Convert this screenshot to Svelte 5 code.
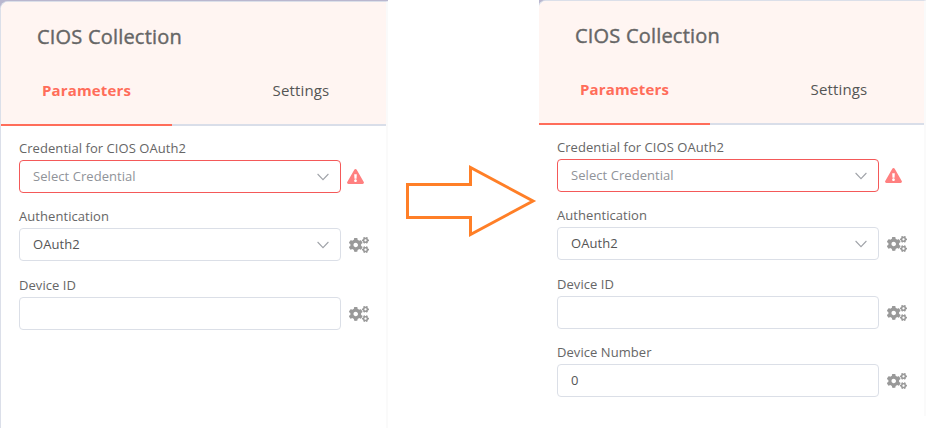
<script lang="ts">
  interface Field {
    label: string;
    value?: string;
    placeholder?: string;
    select?: boolean;
    invalid?: boolean;
    spaced?: boolean;
  }

  const baseFields: Field[] = [
    { label: 'Credential for CIOS OAuth2', placeholder: 'Select Credential', select: true, invalid: true },
    { label: 'Authentication', value: 'OAuth2', select: true },
    { label: 'Device ID', spaced: true },
  ];

  const panels = [
    { side: 'before', fields: baseFields },
    { side: 'after', fields: [...baseFields, { label: 'Device Number', value: '0' } as Field] },
  ];
</script>

{#snippet panel(side: string, fields: Field[])}
  <section class={`panel ${side}`}>
    <div class="panel-inner">
      <header>
        <h1>CIOS Collection</h1>
        <nav>
          <span class="tab active">Parameters</span>
          <span class="tab">Settings</span>
        </nav>
      </header>
      <div class="fields">
        {#each fields as field}
          <div class="field" class:spaced={field.spaced}>
            <div class="label">{field.label}</div>
            <div class="row">
              <div class="input" class:invalid={field.invalid}>
                <span class="text" class:placeholder={!field.value}>{field.value ?? field.placeholder ?? ''}</span>
                {#if field.select}
                  <svg class="chevron" viewBox="0 0 12 8"><path d="M.6 1 6 6.6 11.4 1" /></svg>
                {/if}
              </div>
              {#if field.invalid}
                <svg class="warning" viewBox="0 0 576 512"><path d="M569.517 440.013C587.975 472.007 564.806 512 527.94 512H48.054c-36.937 0-59.999-40.055-41.577-71.987L246.423 23.985c18.467-32.009 64.72-31.951 83.154 0l239.94 416.028zM288 354c-25.405 0-46 20.595-46 46s20.595 46 46 46 46-20.595 46-46-20.595-46-46-46zm-43.673-165.346l7.418 136c.347 6.364 5.609 11.346 11.982 11.346h48.546c6.373 0 11.635-4.982 11.982-11.346l7.418-136c.375-6.874-5.098-12.654-11.982-12.654h-63.383c-6.884 0-12.356 5.78-11.981 12.654z" /></svg>
              {:else}
                <svg class="cogs" class:low={field.select} viewBox="0 0 640 512"><path d="M512.1 191l-8.2 14.3c-3 5.3-9.4 7.5-15.1 5.4-11.8-4.4-22.6-10.7-32.1-18.6-4.6-3.8-5.8-10.5-2.8-15.7l8.2-14.3c-6.9-8-12.3-17.3-15.9-27.4h-16.5c-6 0-11.2-4.3-12.2-10.3-2-12-2.1-24.6 0-37.1 1-6 6.2-10.4 12.2-10.4h16.5c3.6-10.1 9-19.4 15.9-27.4l-8.2-14.3c-3-5.2-1.9-11.9 2.8-15.7 9.5-7.9 20.4-14.2 32.1-18.6 5.7-2.1 12.1.1 15.1 5.4l8.2 14.3c10.5-1.9 21.2-1.9 31.7 0L552 6.3c3-5.3 9.4-7.5 15.1-5.4 11.8 4.4 22.6 10.7 32.1 18.6 4.6 3.8 5.8 10.5 2.8 15.7l-8.2 14.3c6.9 8 12.3 17.3 15.9 27.4h16.5c6 0 11.2 4.3 12.2 10.3 2 12 2.1 24.6 0 37.1-1 6-6.2 10.4-12.2 10.4h-16.5c-3.6 10.1-9 19.4-15.9 27.4l8.2 14.3c3 5.2 1.9 11.9-2.8 15.7-9.5 7.9-20.4 14.2-32.1 18.6-5.7 2.1-12.1-.1-15.1-5.4l-8.2-14.3c-10.4 1.9-21.2 1.9-31.7 0zm-10.5-58.8c38.5 29.6 82.4-14.3 52.8-52.8-38.5-29.7-82.4 14.3-52.8 52.8zM386.3 286.1l33.7 16.8c10.1 5.8 14.5 18.1 10.5 29.1-8.9 24.2-26.4 46.4-42.6 65.8-7.4 8.9-20.2 11.1-30.3 5.3l-29.1-16.8c-16 13.7-34.6 24.6-54.9 31.7v33.6c0 11.6-8.3 21.6-19.7 23.6-24.6 4.2-50.4 4.4-75.9 0-11.5-2-20-11.9-20-23.6V418c-20.3-7.2-38.9-18-54.9-31.7L74 403c-10 5.8-22.9 3.6-30.3-5.3-16.2-19.4-33.3-41.6-42.2-65.7-4-10.9.4-23.2 10.5-29.1l33.3-16.8c-3.9-20.9-3.9-42.4 0-63.4L12 205.8c-10.1-5.8-14.6-18.1-10.5-29 8.9-24.2 26-46.4 42.2-65.8 7.4-8.9 20.2-11.1 30.3-5.3l29.1 16.8c16-13.7 34.6-24.6 54.9-31.7V57.1c0-11.5 8.2-21.5 19.6-23.5 24.6-4.2 50.5-4.4 76-.1 11.5 2 20 11.9 20 23.6v33.6c20.3 7.2 38.9 18 54.9 31.7l29.1-16.8c10-5.8 22.9-3.6 30.3 5.3 16.2 19.4 33.2 41.6 42.1 65.8 4 10.9.1 23.2-10 29.1l-33.7 16.8c3.9 21 3.9 42.5 0 63.5zm-117.6 21.1c59.2-77-28.7-164.9-105.7-105.7-59.2 77 28.7 164.9 105.7 105.7zm243.4 182.7l-8.2 14.3c-3 5.3-9.4 7.5-15.1 5.4-11.8-4.4-22.6-10.7-32.1-18.6-4.6-3.8-5.8-10.5-2.8-15.7l8.2-14.3c-6.9-8-12.3-17.3-15.9-27.4h-16.5c-6 0-11.2-4.3-12.2-10.3-2-12-2.1-24.6 0-37.1 1-6 6.2-10.4 12.2-10.4h16.5c3.6-10.1 9-19.4 15.9-27.4l-8.2-14.3c-3-5.2-1.9-11.9 2.8-15.7 9.5-7.9 20.4-14.2 32.1-18.6 5.7-2.1 12.1.1 15.1 5.4l8.2 14.3c10.5-1.9 21.2-1.9 31.7 0l8.2-14.3c3-5.3 9.4-7.5 15.1-5.4 11.8 4.4 22.6 10.7 32.1 18.6 4.6 3.8 5.8 10.5 2.8 15.7l-8.2 14.3c6.9 8 12.3 17.3 15.9 27.4h16.5c6 0 11.2 4.3 12.2 10.3 2 12 2.1 24.6 0 37.1-1 6-6.2 10.4-12.2 10.4h-16.5c-3.6 10.1-9 19.4-15.9 27.4l8.2 14.3c3 5.2 1.9 11.9-2.8 15.7-9.5 7.9-20.4 14.2-32.1 18.6-5.7 2.1-12.1-.1-15.1-5.4l-8.2-14.3c-10.4 1.9-21.2 1.9-31.7 0zM501.6 431c38.5 29.6 82.4-14.3 52.8-52.8-38.5-29.6-82.4 14.3-52.8 52.8z" /></svg>
              {/if}
            </div>
          </div>
        {/each}
      </div>
    </div>
  </section>
{/snippet}

<main>
  {@render panel(panels[0].side, panels[0].fields)}
  <svg class="arrow" viewBox="0 0 151 100">
    <path d="M19.5 34.5H82.5V17.5L145 51 82.5 84.5V67.5H19.5Z" />
  </svg>
  {@render panel(panels[1].side, panels[1].fields)}
</main>

<style>
  :global(body) {
    background: #fff;
  }

  main {
    display: flex;
    width: 928px;
    height: 428px;
    overflow: hidden;
    font-family: 'Open Sans', sans-serif;
    color: #555;
  }

  .panel {
    box-sizing: border-box;
    flex: none;
    overflow: hidden;
    background: linear-gradient(#b9b7cf 8px, #fff 8px);
  }

  .before {
    width: 388px;
    height: 428px;
    padding-top: 1px;
  }

  .after {
    width: 387px;
    height: 416px;
  }

  /* the second panel is cropped by its left border */
  .after .panel-inner {
    margin-left: -1px;
  }

  .panel-inner {
    box-sizing: border-box;
    width: 388px;
    height: 440px;
    border: 1px solid #dbdfe9;
    border-right: 2px solid #fafafa;
    border-radius: 8px 0 0 0;
    background: #fff;
    overflow: hidden;
  }

  header {
    box-sizing: border-box;
    height: 124px;
    background: #fff5f2;
  }

  h1 {
    box-sizing: border-box;
    height: 70px;
    margin: 0;
    padding: 20px 0 0 36px;
    font-size: 20px;
    line-height: 30px;
    font-weight: 400;
    letter-spacing: 0.2px;
    -webkit-text-stroke: 0.4px #666;
    color: #666;
  }

  nav {
    box-sizing: border-box;
    display: flex;
    justify-content: space-between;
    height: 54px;
    box-shadow: inset 0 -2px #d9dee9;
  }

  .tab {
    box-sizing: border-box;
    width: 171px;
    padding: 6px 0 0 1px;
    font-size: 15px;
    line-height: 24px;
    letter-spacing: 0.15px;
    text-align: center;
  }

  .active {
    padding-left: 0;
    border-bottom: 2px solid #ff6d5a;
    font-weight: 700;
    color: #ff6d5a;
  }

  .fields {
    padding: 14px 17px 0 18px;
  }

  .field {
    margin-bottom: 15px;
  }

  .spaced {
    padding-top: 1px;
  }

  .label {
    height: 20px;
    font-size: 13px;
    line-height: 17px;
    letter-spacing: 0.06px;
    color: #666;
  }

  .row {
    display: flex;
    align-items: center;
  }

  .input {
    box-sizing: border-box;
    display: flex;
    align-items: center;
    justify-content: space-between;
    width: 322px;
    height: 33px;
    padding: 0 11px 0 13px;
    border: 1px solid #dbdfe7;
    border-radius: 4px;
    font-size: 13px;
  }

  .text {
    padding-bottom: 1px;
    letter-spacing: 0.06px;
  }

  .invalid {
    border-color: #f45959;
  }

  .placeholder {
    color: #909399;
  }

  .chevron {
    width: 12px;
    height: 8px;
    fill: none;
    stroke: #a0a3a9;
    stroke-width: 1.1;
  }

  .warning {
    width: 17px;
    height: 15px;
    margin-left: 6px;
    fill: #ff8080;
  }

  .cogs {
    width: 20px;
    height: 16px;
    margin-left: 8px;
    fill: #999;
  }

  .low {
    margin-top: 1px;
  }

  .arrow {
    flex: none;
    width: 151px;
    height: 100px;
    margin-top: 150px;
    fill: none;
    stroke: #ff7f27;
    stroke-width: 3;
  }
</style>
